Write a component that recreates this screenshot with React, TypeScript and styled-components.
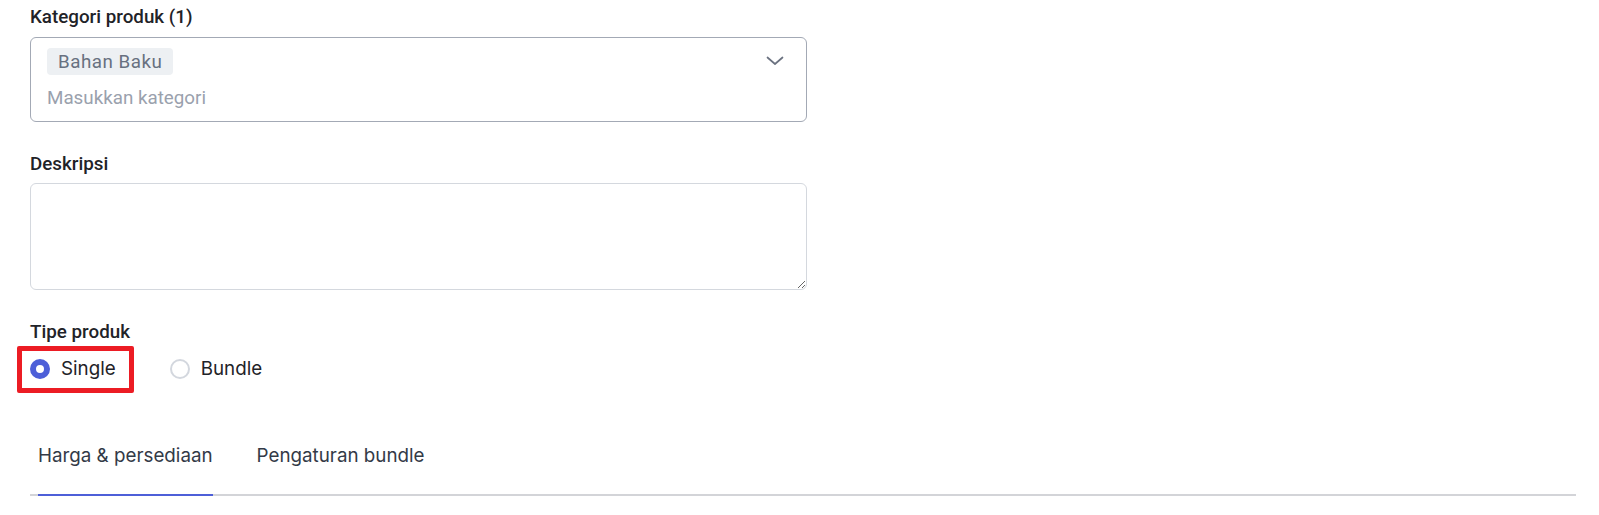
import React, { useState } from "react";
import styled, { createGlobalStyle } from "styled-components";

const Global = createGlobalStyle`
  html, body { margin: 0; padding: 0; background: #ffffff; }
  body { font-family: Roboto, "Noto Sans", sans-serif; }
  * { box-sizing: border-box; }
`;

const Page = styled.div`
  width: 1599px;
  padding: 5px 23px 0 30px;
  display: flex;
  flex-direction: column;
`;

const Field = styled.div<{ $gap?: number }>`
  width: 777px;
  display: flex;
  flex-direction: column;
  margin-bottom: ${(p) => p.$gap ?? 0}px;
`;

const Label = styled.div<{ $mb?: number }>`
  font-family: Roboto, sans-serif;
  font-weight: 500;
  font-size: 18.8px;
  line-height: 24px;
  color: #1f2328;
  margin-bottom: ${(p) => p.$mb ?? 7}px;
`;

const SelectBox = styled.div`
  position: relative;
  height: 85px;
  border: 1px solid #a3a9b5;
  border-radius: 6px;
  padding: 10px 50px 0 16px;
  display: flex;
  flex-direction: column;
  align-items: flex-start;
`;

const Tag = styled.span`
  display: inline-flex;
  align-items: center;
  height: 27px;
  padding: 0 11px;
  border-radius: 4px;
  background: #edf0f3;
  color: #687180;
  font-size: 18.8px;
  letter-spacing: 0.5px;
  font-family: Roboto, sans-serif;
`;

const Placeholder = styled.div`
  margin-top: 11px;
  font-size: 18.8px;
  line-height: 24px;
  color: #9aa1ad;
`;

const Chevron = styled.svg`
  position: absolute;
  top: 18px;
  right: 22px;
`;

const TextArea = styled.textarea`
  height: 107px;
  border: 1px solid #d4d8de;
  border-radius: 6px;
  resize: vertical;
  font-family: Roboto, sans-serif;
  font-size: 18.8px;
  padding: 10px 16px;
  outline: none;
`;

const RadioRow = styled.div`
  display: flex;
  align-items: center;
  gap: 23px;
  margin-left: -13px;
`;

const RadioOption = styled.label<{ $highlight?: boolean }>`
  display: flex;
  align-items: center;
  gap: 11px;
  height: 47px;
  padding: 0 13px 1px 8px;
  border: 5px solid ${(p) => (p.$highlight ? "#ec1c24" : "transparent")};
  border-radius: 2px;
  font-family: Inter, sans-serif;
  font-size: 18.8px;
  line-height: 24px;
  color: #1f2328;
  cursor: pointer;
`;

const RadioDot = styled.span<{ $checked?: boolean }>`
  width: 20px;
  height: 20px;
  border-radius: 50%;
  border: ${(p) => (p.$checked ? "6.5px solid #4d5fd8" : "2px solid #d3d7de")};
  background: #fff;
  flex: none;
`;

const Tabs = styled.div`
  margin-top: 51px;
  display: flex;
  gap: 44px;
  padding-left: 8px;
  border-bottom: 2px solid #d3d4d8;
  width: 1546px;
`;

const Tab = styled.div<{ $active?: boolean }>`
  position: relative;
  padding-bottom: 26px;
  font-family: Inter, sans-serif;
  font-size: 18.8px;
  line-height: 24px;
  color: #333a47;
  cursor: pointer;
  ${(p) =>
    p.$active
      ? `&::after { content: ""; position: absolute; left: 0; right: 0; bottom: -2px; height: 2.5px; background: #4d5fd8; }`
      : ""}
`;

export default function App() {
  const [type, setType] = useState("single");
  const [tab, setTab] = useState(0);
  return (
    <>
      <Global />
      <Page>
        <Field $gap={30}>
          <Label $mb={8}>Kategori produk (1)</Label>
          <SelectBox>
            <Tag>Bahan Baku</Tag>
            <Placeholder>Masukkan kategori</Placeholder>
            <Chevron width="18" height="10" viewBox="0 0 18 10" fill="none">
              <path d="M1.5 1.5 L9 8 L16.5 1.5" stroke="#6b7280" strokeWidth="1.7" strokeLinecap="round" strokeLinejoin="round" />
            </Chevron>
          </SelectBox>
        </Field>
        <Field $gap={30}>
          <Label>Deskripsi</Label>
          <TextArea />
        </Field>
        <Field>
          <Label $mb={2}>Tipe produk</Label>
          <RadioRow>
            <RadioOption $highlight onClick={() => setType("single")}>
              <RadioDot $checked={type === "single"} />
              Single
            </RadioOption>
            <RadioOption onClick={() => setType("bundle")}>
              <RadioDot $checked={type === "bundle"} />
              Bundle
            </RadioOption>
          </RadioRow>
        </Field>
        <Tabs>
          <Tab $active={tab === 0} onClick={() => setTab(0)}>Harga &amp; persediaan</Tab>
          <Tab $active={tab === 1} onClick={() => setTab(1)}>Pengaturan bundle</Tab>
        </Tabs>
      </Page>
    </>
  );
}
